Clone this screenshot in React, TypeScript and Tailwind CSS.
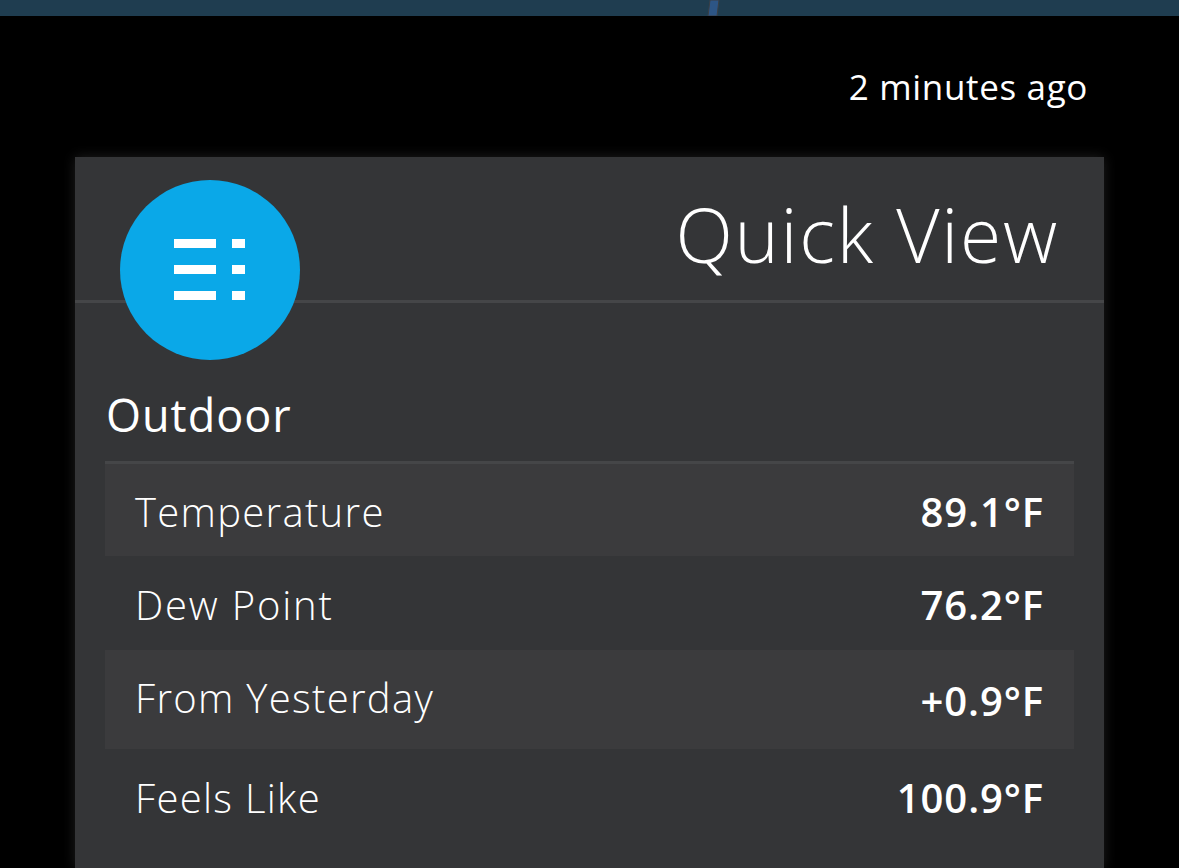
const rows = [
  { label: 'Temperature', value: '89.1°F', height: 'h-[92px]', striped: true, labelClass: 'tracking-[1.3px]' },
  { label: 'Dew Point', value: '76.2°F', height: 'h-[94px]', striped: false, labelClass: 'tracking-[1.8px]' },
  { label: 'From Yesterday', value: '+0.9°F', height: 'h-[99px]', striped: true, labelClass: 'tracking-[1.3px] pb-[7px]' },
  { label: 'Feels Like', value: '100.9°F', height: 'h-[94px]', striped: false, labelClass: 'tracking-[1.3px]' },
];

const App = () => {
  return (
    <div className="h-[868px] overflow-hidden bg-black font-['Open_Sans',sans-serif] text-white">
      {/* Map strip */}
      <div className="relative h-[16px] bg-[#1f3d50]">
        <svg className="absolute left-[707px] top-0" width="14" height="16" viewBox="0 0 14 16">
          <path d="M3 0h9l-2 16H1z" fill="#2d5585" stroke="#3a3f45" strokeWidth="1" />
        </svg>
      </div>

      <div className="flex h-[141px] justify-end pr-[91px] pt-[49px]">
        <span className="text-[35px] leading-[44px] tracking-[0.65px]">2 minutes ago</span>
      </div>

      <div className="mx-[75px] h-[711px] bg-[#343537] shadow-[0_0_12px_rgba(255,255,255,0.12)]">
        <div className="relative flex h-[146px] justify-end border-b-[3px] border-[#454648] pr-[45px] pt-[27px]">
          <h1 className="text-[75px] font-light leading-[100px] tracking-[1.8px]">Quick View</h1>
          <div className="absolute left-[45px] top-[23px] z-10 flex h-[180px] w-[180px] items-center justify-center rounded-full bg-[#0aa8e8]">
            <svg width="72" height="62" viewBox="0 0 72 62" fill="#ffffff">
              <rect x="0" y="0" width="42" height="9" />
              <rect x="58" y="0" width="13" height="9" />
              <rect x="0" y="26" width="42" height="9" />
              <rect x="58" y="26" width="13" height="9" />
              <rect x="0" y="52" width="42" height="9" />
              <rect x="58" y="52" width="13" height="9" />
            </svg>
          </div>
        </div>

        <div className="px-[30px] pt-[84px]">
          <h2 className="mb-[18px] pl-px text-[45px] leading-[56px] tracking-[1px]">Outdoor</h2>
          <div className="border-t-[3px] border-[#454648]">
            {rows.map((row) => (
              <div
                key={row.label}
                className={`flex items-center justify-between px-[30px] pt-[3px] ${row.height} ${row.striped ? 'bg-[#3b3b3d]' : ''}`}
              >
                <span className={`text-[40px] font-light ${row.labelClass}`}>{row.label}</span>
                <span className="text-[40px] font-semibold tracking-[0.9px]">{row.value}</span>
              </div>
            ))}
          </div>
        </div>
      </div>
    </div>
  );
};

export default App;
